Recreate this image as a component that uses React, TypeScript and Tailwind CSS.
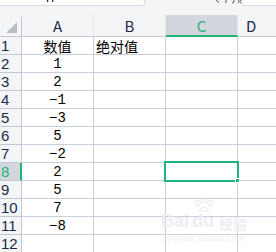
import React from "react";

const rows: { n: number; a: string; b?: string }[] = [
  { n: 1, a: "数值", b: "绝对值" },
  { n: 2, a: "1" },
  { n: 3, a: "2" },
  { n: 4, a: "−1" },
  { n: 5, a: "−3" },
  { n: 6, a: "5" },
  { n: 7, a: "−2" },
  { n: 8, a: "2" },
  { n: 9, a: "5" },
  { n: 10, a: "7" },
  { n: 11, a: "−8" },
  { n: 12, a: "" },
];

const cellFont = {
  fontFamily: '"Liberation Mono", "Noto Sans CJK SC", monospace',
};
const numFont = {
  fontFamily: '"Liberation Sans", "DejaVu Sans", sans-serif',
};

export default function App() {
  return (
    <div
      className="relative w-[276px] h-[252px] overflow-hidden bg-white"
      style={{ fontFamily: '"Noto Sans CJK SC", "Liberation Sans", sans-serif' }}
    >
      {/* top strip (cut-off formula bar) */}
      <div className="flex h-[15px] items-start bg-[#f4f5f7]">
        <div className="relative h-[6px] w-[145px] rounded-br-[3px] border-b border-r border-[#dadde4] bg-white">
          <svg className="absolute left-[46px] top-0" width="9" height="3" viewBox="0 0 9 3">
            <rect x="1" y="0" width="1.2" height="2" fill="#222" />
            <rect x="6" y="0" width="1.2" height="2" fill="#222" />
          </svg>
        </div>
        <div className="relative h-[6px] flex-1">
          <svg className="absolute left-[70px] top-0" width="32" height="4" viewBox="0 0 32 4">
            <path d="M1 0 Q2 2 4 2" stroke="#555" strokeWidth="1" fill="none" />
            <path d="M11 0 Q12 2 10 3" stroke="#555" strokeWidth="1" fill="none" />
            <path d="M19 0 L19 2 Q18 3 17 3" stroke="#555" strokeWidth="1" fill="none" />
            <path d="M23 0 L26 3 M26 0 L23 3" stroke="#555" strokeWidth="1" fill="none" />
          </svg>
        </div>
        <div className="h-[6px] w-[35px] rounded-bl-[3px] border-b border-l border-[#dadde4] bg-white" />
      </div>

      {/* grid */}
      <div className="grid grid-cols-[22px_72px_72px_72px_1fr]">
        {/* header row */}
        <div className="relative h-[22px] border-b border-r border-[#c3c8d4] bg-[#f4f5f7]">
          <svg className="absolute left-[6px] top-[7px]" width="11" height="11" viewBox="0 0 11 11">
            <polygon points="11,0 11,11 0,11" fill="#b9bcc2" />
          </svg>
        </div>
        {["A", "B"].map((c) => (
          <div
            key={c}
            className="flex h-[22px] items-center justify-center border-b border-r border-b-[#c3c8d4] border-r-[#e1e4ea] bg-[#f4f5f7] pt-[1px] text-[15px] text-[#1b2a47]"
          >
            {c}
          </div>
        ))}
        <div className="flex h-[22px] items-center justify-center border-b-2 border-r border-b-[#20b478] border-r-[#e1e4ea] bg-[#d3d6dc] pt-[2px] text-[15px] text-[#20b478]">
          C
        </div>
        <div className="flex h-[22px] items-center border-b border-[#c3c8d4] bg-[#f4f5f7] pl-[8px] pt-[1px] text-[15px] text-[#1b2a47]">
          D
        </div>

        {rows.map((r) => {
          const sel = r.n === 8;
          return (
            <React.Fragment key={r.n}>
              <div
                className={
                  sel
                    ? "flex h-[18px] items-center border-b border-r-2 border-b-[#c3c8d4] border-r-[#20b478] bg-[#d3d6dc] pl-[1px] text-[15px] leading-[15px] text-[#20b478]"
                    : "flex h-[18px] items-center border-b border-r border-[#c3c8d4] bg-[#f4f5f7] pl-[1px] text-[15px] leading-[15px] text-[#1b2a47]"
                }
                style={numFont}
              >
                {r.n}
              </div>
              <div
                className="flex h-[18px] items-center justify-center border-b border-r border-[#c9cedb] text-[14px] leading-[14px] text-black"
                style={r.n === 1 ? undefined : cellFont}
              >
                {r.a}
              </div>
              <div className="flex h-[18px] items-center border-b border-r border-[#c9cedb] pl-[2px] text-[14px] leading-[14px] text-black">
                {r.b ?? ""}
              </div>
              <div className="relative h-[18px] border-b border-r border-[#c9cedb]">
                {sel && (
                  <div className="absolute left-[-2px] right-[-2px] top-[-2px] bottom-[-2px] z-10 border-2 border-[#20b478]">
                    <div className="absolute bottom-[-3px] right-[-3px] h-[5px] w-[5px] border border-white bg-[#20b478]" />
                  </div>
                )}
              </div>
              <div className="h-[18px] border-b border-[#c9cedb]" />
            </React.Fragment>
          );
        })}
      </div>

      {/* watermark */}
      <div className="pointer-events-none absolute left-[158px] top-[197px] flex w-[92px] flex-col items-center text-[#eceef2]">
        <svg width="20" height="15" viewBox="0 0 20 15">
          <ellipse cx="4" cy="6" rx="2.3" ry="2.8" fill="none" stroke="#e6e8ed" />
          <ellipse cx="10" cy="3" rx="2.3" ry="2.8" fill="none" stroke="#e6e8ed" />
          <ellipse cx="16" cy="6" rx="2.3" ry="2.8" fill="none" stroke="#e6e8ed" />
          <path d="M5 14 Q10 6 15 14 Z" fill="none" stroke="#e6e8ed" />
        </svg>
        <div className="flex items-end gap-[3px] leading-none">
          <span className="text-[18px] font-bold" style={{ fontFamily: '"Liberation Sans", sans-serif' }}>
            Bai
          </span>
          <span className="text-[18px] font-bold" style={{ fontFamily: '"Liberation Sans", sans-serif' }}>
            du
          </span>
          <span className="ml-[2px] text-[14px] font-bold">经验</span>
        </div>
        <span className="mt-[4px] text-[9px] leading-none tracking-[0.6px]" style={{ fontFamily: '"Liberation Sans", sans-serif' }}>
          jingyan.baidu.com
        </span>
      </div>
    </div>
  );
}
